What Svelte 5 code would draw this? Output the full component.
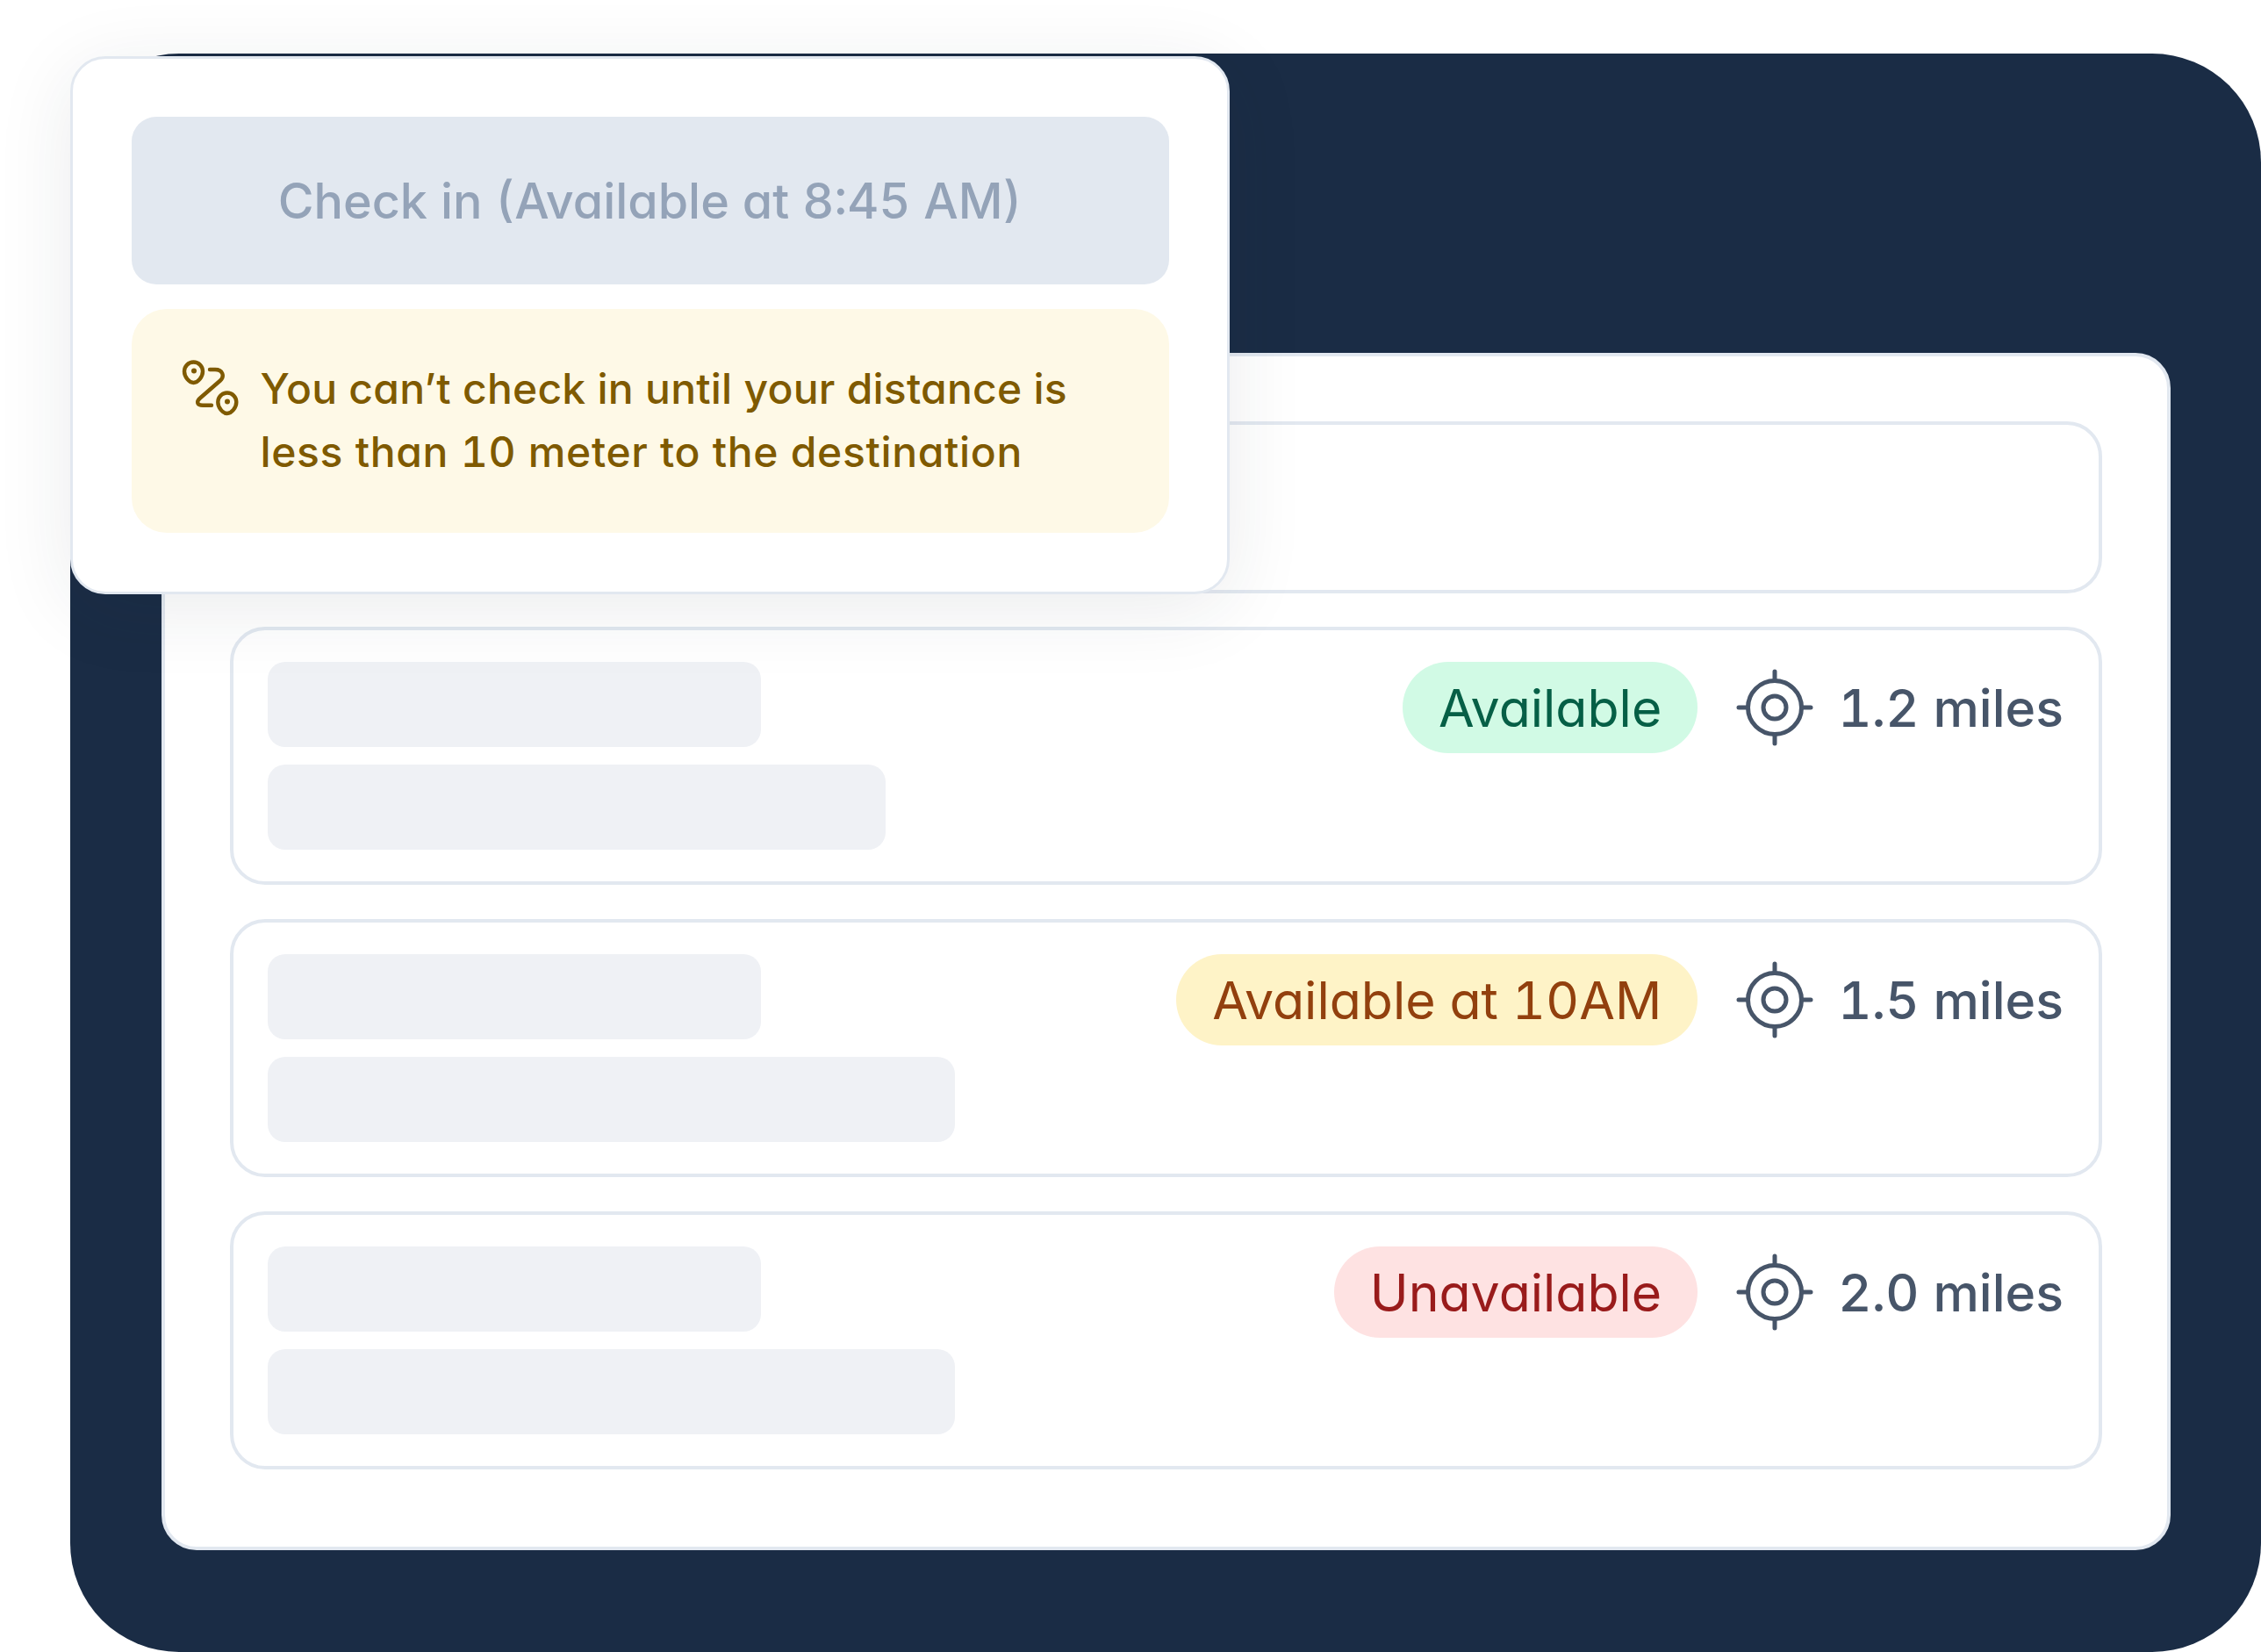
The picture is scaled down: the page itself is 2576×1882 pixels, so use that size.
<script>
  const rows = [
    { id: 2, bar: 704, label: 'Available', tone: 'green', miles: '1.2 miles' },
    { id: 3, bar: 783, label: 'Available at 10AM', tone: 'amber', miles: '1.5 miles' },
    { id: 4, bar: 783, label: 'Unavailable', tone: 'red', miles: '2.0 miles' }
  ];
</script>

<div class="page">
  <div class="panel">
    <div class="card">
      <div class="row empty"></div>
      {#each rows as row (row.id)}
        <div class="row">
          <div class="bars">
            <div class="bar first"></div>
            <div class="bar" style="width: {row.bar}px"></div>
          </div>
          <div class="meta">
            <span class="badge {row.tone}">{row.label}</span>
            <svg class="target" viewBox="0 0 96 96" fill="none" stroke="#475569" stroke-width="5" stroke-linecap="round">
              <circle cx="48" cy="48" r="30.5" />
              <circle cx="48" cy="48" r="13" />
              <path d="M48 7V17M48 79V89M7 48H17M79 48H89" />
            </svg>
            <span class="miles">{row.miles}</span>
          </div>
        </div>
      {/each}
    </div>

    <div class="popover">
      <div class="checkin">Check in (Available at 8:45 AM)</div>
      <div class="notice">
        <svg class="route" viewBox="34 28 70 70" fill="none" stroke="#7f5a00" stroke-width="4.4" stroke-linecap="round" stroke-linejoin="round">
          <path d="M50.5 33.5a10.500 10.500 0 0 1 10.500 10.500c0 6.500-5.500 13-10.500 13s-10.500-6.500-10.500-13a10.500 10.500 0 0 1 10.500-10.500z" />
          <circle cx="51" cy="43.500" r="3" fill="#7f5a00" stroke="none" />
          <path d="M50.500 33.500a10.500 10.500 0 0 1 10.500 10.500c0 6.500-5.500 13-10.500 13s-10.500-6.500-10.500-13a10.500 10.500 0 0 1 10.500-10.500z" transform="translate(38.300 35)" />
          <circle cx="89" cy="78.500" r="3" fill="#7f5a00" stroke="none" />
          <path d="M69 42H75C84 42 86 50 81 54.500L58 74.500C53 79 55 82.700 61 82.700H71" />
        </svg>
        <p><span class="line-a">You can’t check in until your distance is</span><br /><span class="line-b">less than 10 meter to the destination</span></p>
      </div>
    </div>
  </div>
</div>

<style>
  :global(body) {
    margin: 0;
    background: #fff;
  }

  .page {
    width: 2576px;
    height: 1882px;
    padding: 61px 0 0 80px;
    box-sizing: border-box;
    overflow: hidden;
    font-family: Inter, "Liberation Sans", sans-serif;
    font-feature-settings: "cv11", "tnum";
  }

  .panel {
    position: relative;
    width: 2496px;
    height: 1821px;
    padding: 341px 103px 0 104px;
    box-sizing: border-box;
    background: #1a2c45;
    border-radius: 124px;
  }

  .card {
    display: flex;
    flex-direction: column;
    gap: 39px;
    height: 1364px;
    padding: 74px 74px 88px 74px;
    box-sizing: border-box;
    background: #fff;
    border: 4px solid #e2e8f0;
    border-radius: 40px;
  }

  .row {
    display: flex;
    justify-content: space-between;
    align-items: flex-start;
    height: 294px;
    padding: 36px 40px 36px 39px;
    box-sizing: border-box;
    border: 4px solid #e2e8f0;
    border-radius: 40px;
  }

  .row.empty {
    height: 196px;
    margin-bottom: -1px;
  }

  .bars {
    display: flex;
    flex-direction: column;
    gap: 20px;
  }

  .bar {
    height: 97px;
    background: #eff1f5;
    border-radius: 20px;
  }

  .bar.first {
    width: 562px;
  }

  .meta {
    display: flex;
    align-items: center;
  }

  .badge {
    height: 104px;
    padding: 0 41px;
    display: flex;
    align-items: center;
    border-radius: 52px;
    font-size: 59px;
  }

  .green {
    background: #d1fae5;
    color: #065f46;
  }

  .amber {
    background: #fef3c7;
    color: #92400e;
  }

  .red {
    background: #fee2e2;
    color: #991b1b;
  }

  .target {
    width: 96px;
    height: 96px;
    margin: 0 24px 0 40px;
    flex: none;
  }

  .miles {
    font-size: 59px;
    font-weight: 500;
    color: #475569;
  }

  .popover {
    position: absolute;
    left: 0;
    top: 3px;
    display: flex;
    flex-direction: column;
    gap: 28px;
    width: 1321px;
    height: 613px;
    padding: 66px 66.5px;
    box-sizing: border-box;
    background: #fff;
    border: 3px solid #e2e8f0;
    border-radius: 40px;
    box-shadow: 0 16px 90px rgba(30, 41, 59, 0.09);
  }

  .checkin {
    height: 191px;
    display: flex;
    align-items: center;
    justify-content: center;
    background: #e2e8f0;
    color: #94a3b8;
    border-radius: 28px;
    font-size: 55.7px;
    font-weight: 500;
  }

  .notice {
    display: flex;
    align-items: flex-start;
    height: 255px;
    padding: 55px 0 0 54px;
    box-sizing: border-box;
    background: #fef9e7;
    border-radius: 40px;
  }

  .route {
    width: 70px;
    height: 70px;
    flex: none;
  }

  .notice p {
    margin: 0 0 0 23px;
    font-size: 48px;
    font-weight: 500;
    line-height: 72px;
    color: #7f5a00;
  }

  .line-a {
    letter-spacing: 0.22px;
  }

  .line-b {
    letter-spacing: 0.66px;
  }
</style>
